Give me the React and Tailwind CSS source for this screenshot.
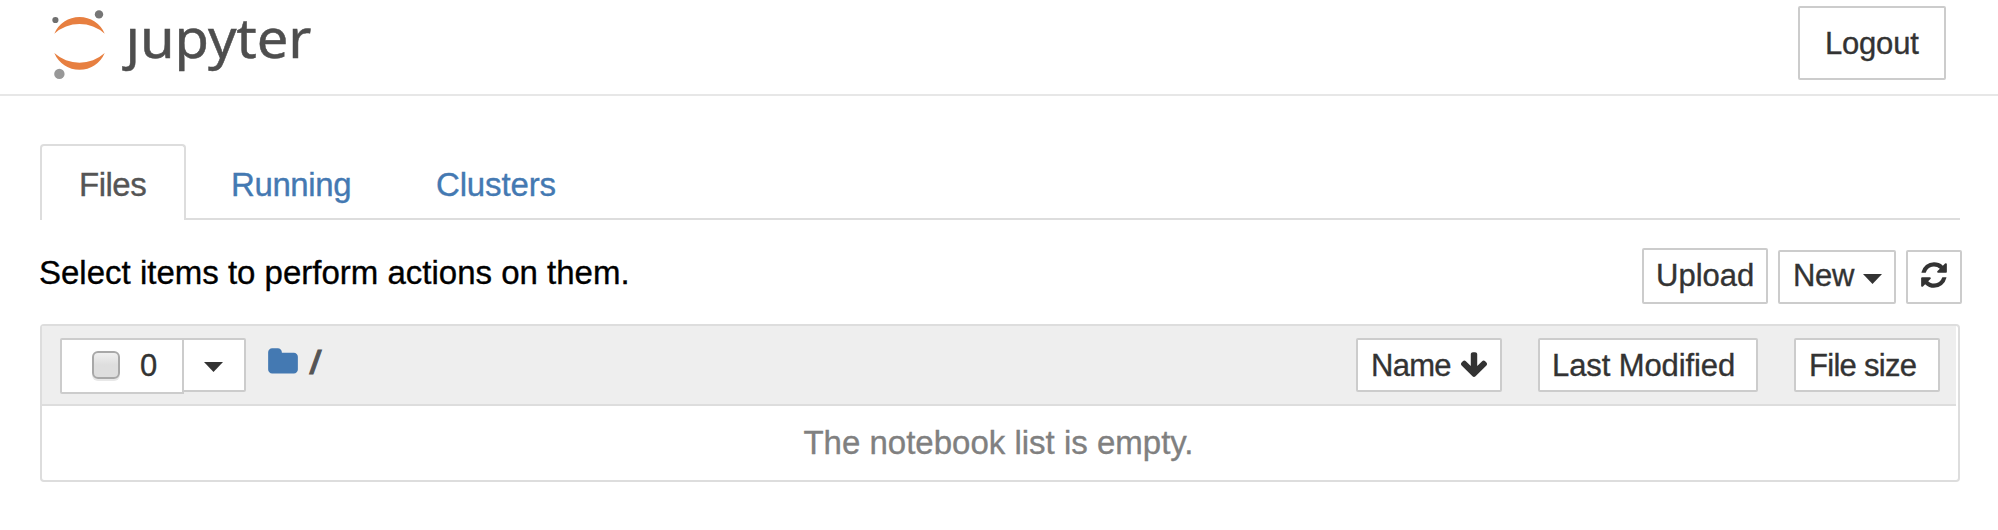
function Logo() {
  return (
    <svg width="280" height="90" viewBox="40 0 280 90" role="img" aria-label="jupyter">
      <path d="M54.3 33.7A27.3 27.3 0 0 1 104.7 33.7A37.7 37.7 0 0 0 54.3 33.7Z" fill="#e77f40" />
      <path d="M54.3 53A27.3 27.3 0 0 0 104.7 53A37.7 37.7 0 0 1 54.3 53Z" fill="#e77f40" />
      <circle cx="55.4" cy="20" r="3.1" fill="#6f6f6f" />
      <circle cx="99" cy="14.4" r="4.2" fill="#767676" />
      <circle cx="59.4" cy="73.9" r="5.2" fill="#989898" />
      <text
        x="125.5"
        y="57.6"
        fontSize="55"
        textLength="186"
        lengthAdjust="spacingAndGlyphs"
        fill="#4e4e4e"
        stroke="#4e4e4e"
        strokeWidth="0.5"
        fontFamily="'Noto Sans', 'Open Sans', sans-serif"
      >
        ȷupyter
      </text>
    </svg>
  );
}

function FaGlyph({ d, className }) {
  return (
    <svg viewBox="0 0 1792 1792" fill="currentColor" className={className} aria-hidden="true">
      <path d={d} />
    </svg>
  );
}

const REFRESH =
  "M1639 1056q0 5-1 7-64 268-268 434.5t-478 166.5q-146 0-282.5-55t-243.5-157l-129 129q-19 19-45 19t-45-19-19-45v-448q0-26 19-45t45-19h448q26 0 45 19t19 45-19 45l-137 137q71 66 161 102t187 36q134 0 250-65t186-179q11-17 53-117 8-23 30-23h192q13 0 22.5 9.5t9.5 22.5zm25-800v448q0 26-19 45t-45 19h-448q-26 0-45-19t-19-45 19-45l138-138q-148-137-349-137-134 0-250 65t-186 179q-11 17-53 117-8 23-30 23h-199q-13 0-22.5-9.5t-9.5-22.5v-7q65-268 270-434.5t480-166.5q146 0 284 55.5t245 156.5l130-129q19-19 45-19t45 19 19 45z";
const ARROW_DOWN =
  "M1675 832q0 53-37 90l-651 652q-39 37-91 37-53 0-90-37l-651-652q-38-36-38-90 0-53 38-91l74-75q39-37 91-37 53 0 90 37l294 294v-704q0-52 38-90t90-38h128q52 0 90 38t38 90v704l294-294q37-37 90-37 52 0 91 37l75 75q37 39 37 91z";
const FOLDER =
  "M1728 608v704q0 92-66 158t-158 66h-1216q-92 0-158-66t-66-158v-960q0-92 66-158t158-66h320q92 0 158 66t66 158v32h672q92 0 158 66t66 158z";

function Caret({ className = "" }) {
  return (
    <svg width="19" height="10" viewBox="0 0 19 10" fill="currentColor" className={className} aria-hidden="true">
      <path d="M0 0H19L9.5 10Z" />
    </svg>
  );
}

function Button({ className, children }) {
  return (
    <button
      className={
        "flex shrink-0 items-center whitespace-nowrap rounded-[2px] border-2 border-[#ccc] bg-white text-[31px] leading-none text-[#333] " +
        className
      }
    >
      {children}
    </button>
  );
}

export default function App() {
  return (
    <div className="h-[530px] w-[1998px] overflow-hidden bg-white font-['Liberation_Sans',Arial,sans-serif] [-webkit-text-stroke:0.35px_currentColor]">
      <header className="flex h-24 items-start justify-between border-b-2 border-[#e7e7e7] pl-10 pr-[52px]">
        <Logo />
        <Button className="mt-1.5 h-[74px] w-[148px] pl-[25px] tracking-[-0.2px]">Logout</Button>
      </header>

      <main className="pl-10 pr-[38px] pt-12">
        <nav className="flex h-[76px] items-stretch text-[33px] leading-none text-[#4479b2]">
          <a className="flex w-[146px] items-center rounded-t-[4px] border-2 border-b-0 border-[#ddd] pl-[37px] pt-[3px] tracking-[-0.5px] text-[#555]">
            Files
          </a>
          <div className="flex flex-1 items-center border-b-2 border-[#ddd] pt-[7px] tracking-[-0.4px]">
            <a className="w-[205px] pl-[45px]">Running</a>
            <a className="pl-[45px] tracking-[-0.15px]">Clusters</a>
          </div>
        </nav>

        <div className="-mr-0.5 flex h-[84px] items-end pt-7">
          <p className="-ml-px mb-[13px] flex-1 self-end text-[33px] leading-[36px] text-black">
            Select items to perform actions on them.
          </p>
          <Button className="h-14 w-[126px] pb-0.5 pl-3">Upload</Button>
          <Button className="ml-2.5 h-[54px] w-[118px] pb-1 pl-[13px] tracking-[-0.3px]">
            New
            <Caret className="ml-[9px] mt-2" />
          </Button>
          <Button className="ml-2.5 h-[54px] w-14 justify-center">
            <FaGlyph d={REFRESH} className="mb-1 size-[30px]" />
          </Button>
        </div>

        <section className="mt-5 h-[158px] rounded-[4px] border-2 border-[#ddd]">
          <div className="mr-0.5 flex h-20 items-start border-b-2 border-[#ddd] bg-[#eee] pl-[18px] pr-4 pt-3">
            <Button className="h-14 w-[124px] rounded-r-none pb-0.5 pl-[30px]">
              <span className="h-7 w-7 rounded-[6px] border-2 border-[#a8a8a8] bg-linear-to-b from-[#f0f0f0] via-[#dedede] to-[#dedede] shadow-[0_2px_0_#e8e8e8]" />
              <span className="ml-5">0</span>
            </Button>
            <Button className="-ml-0.5 h-[54px] w-16 justify-center rounded-l-none pr-px">
              <Caret className="mt-1" />
            </Button>
            <div className="ml-[21px] flex flex-1 items-start text-[#555]">
              <FaGlyph d={FOLDER} className="mt-2 size-8 text-[#4479b2]" />
              <span className="ml-[12px] mt-[7px] origin-center scale-x-[1.3] text-[33px] leading-[36px] [-webkit-text-stroke:0.9px_currentColor]">/</span>
            </div>
            <Button className="h-[54px] w-[146px] pl-[13px]">
              <span className="tracking-[-0.7px]">Name</span>
              <FaGlyph d={ARROW_DOWN} className="ml-2 size-[30px]" />
            </Button>
            <Button className="ml-9 h-[54px] w-[220px] pl-3 tracking-[-0.1px]">Last Modified</Button>
            <Button className="ml-9 h-[54px] w-[146px] pl-[13px] tracking-[-0.7px]">File size</Button>
          </div>
          <div className="flex h-[74px] items-center justify-center pb-0.5 pr-[3px] text-[33px] leading-none text-[#808080]">
            The notebook list is empty.
          </div>
        </section>
      </main>
    </div>
  );
}
